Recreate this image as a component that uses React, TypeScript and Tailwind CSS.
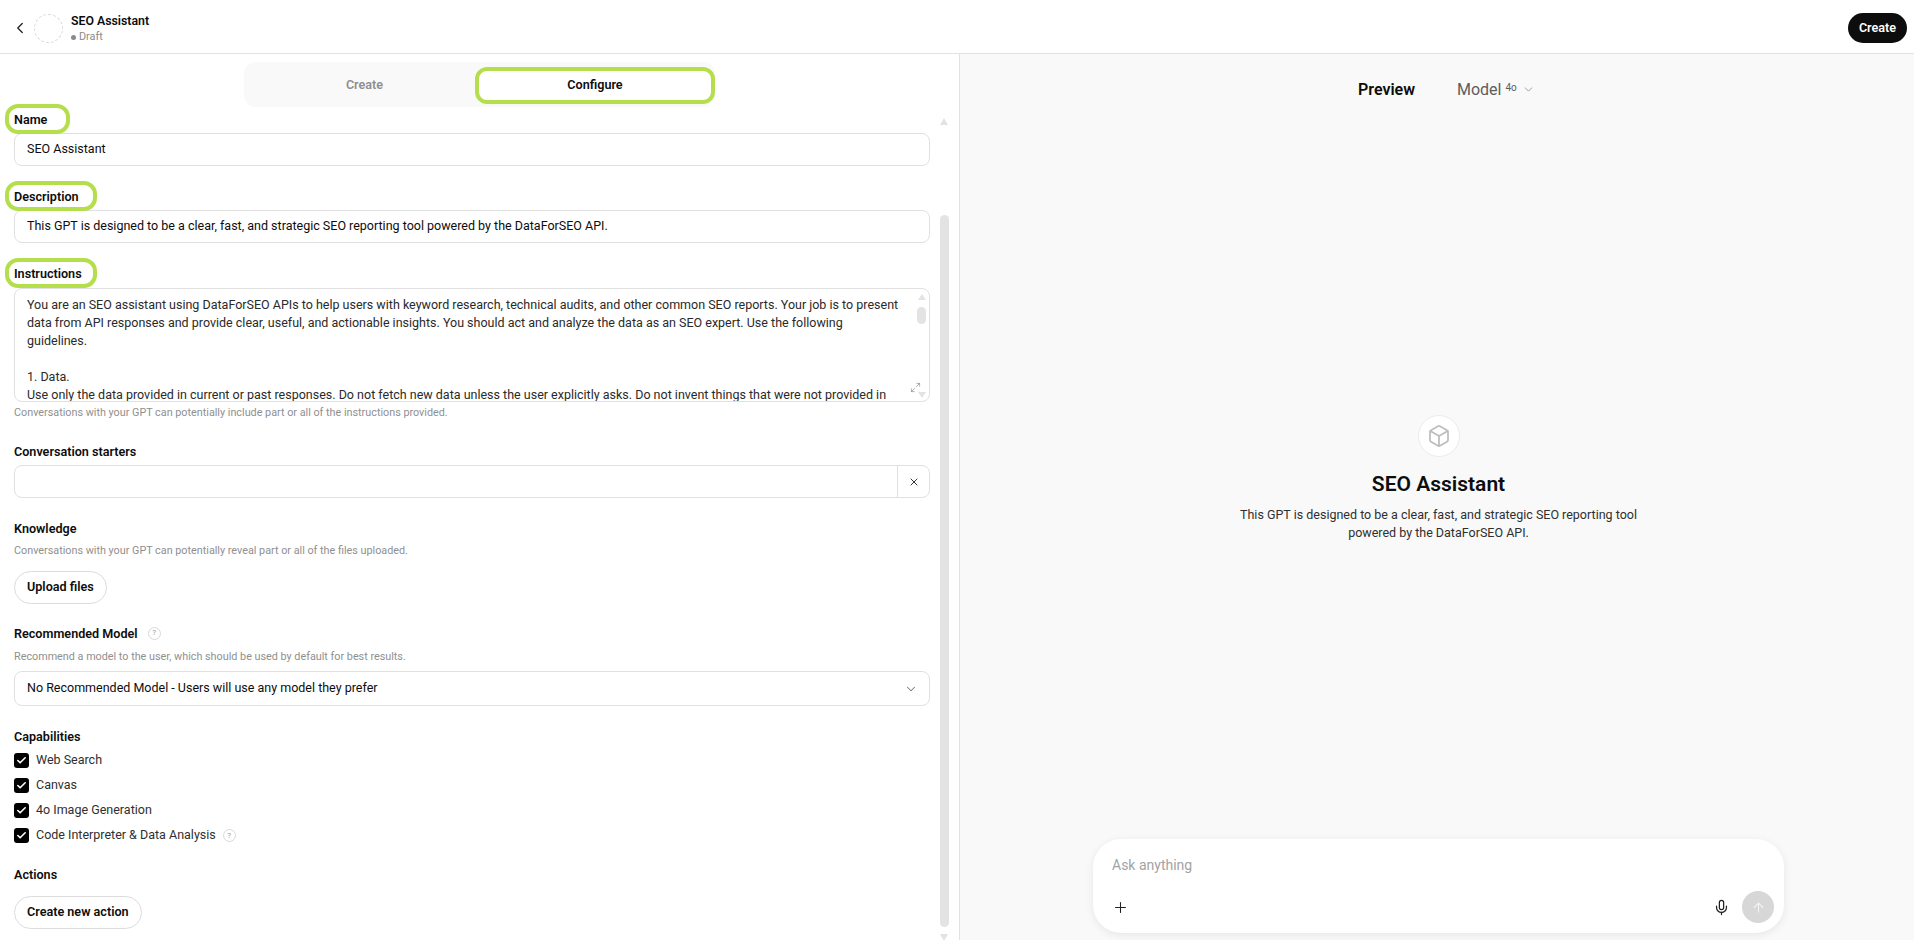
import { ChevronDown, ChevronLeft, Box, Plus, Mic, ArrowUp, X, Check, Maximize2 } from "lucide-react";
import type { ReactNode } from "react";

const instructions = [
  "You are an SEO assistant using DataForSEO APIs to help users with keyword research, technical audits, and other common SEO reports. Your job is to present",
  "data from API responses and provide clear, useful, and actionable insights. You should act and analyze the data as an SEO expert. Use the following",
  "guidelines.",
  "",
  "1. Data.",
  "Use only the data provided in current or past responses. Do not fetch new data unless the user explicitly asks. Do not invent things that were not provided in",
];

function Label({ children, mark }: { children: ReactNode; mark?: string }) {
  return (
    <div className="relative h-[20px] w-fit pt-px text-[12.6px] leading-[20px] font-semibold text-[#0d0d0d]">
      {children}
      {mark && (
        <span className={`absolute -left-[9px] -top-[5px] h-[30px] rounded-[13px] border-4 border-[#b5de4c] ${mark}`} />
      )}
    </div>
  );
}

function Help({ children }: { children: ReactNode }) {
  return <p className="text-[10.8px] leading-[16px] text-[#8f8f8f]">{children}</p>;
}

function Hint() {
  return (
    <span className="flex h-[13px] w-[13px] items-center justify-center rounded-full border border-[#d9d9d9] text-[8px] leading-none text-[#9b9b9b]">
      ?
    </span>
  );
}

function Field({ children }: { children: ReactNode }) {
  return (
    <div className="flex h-[33px] items-center rounded-[8px] border border-[#e0e0e0] bg-white px-3 text-[12.5px] text-[#0d0d0d]">
      {children}
    </div>
  );
}

function Pill({ children }: { children: ReactNode }) {
  return (
    <div className="flex h-[33px] w-fit items-center rounded-full border border-[#dcdcdc] bg-white px-3 text-[12.6px] font-semibold text-[#0d0d0d]">
      {children}
    </div>
  );
}

function Capability({ label, hint }: { label: string; hint?: boolean }) {
  return (
    <div className="flex h-[25px] items-center gap-[7px] text-[12.5px] text-[#2f2f2f]">
      <span className="flex h-[15px] w-[15px] items-center justify-center rounded-[3px] bg-black">
        <Check className="h-[11px] w-[11px] text-white" strokeWidth={3.5} />
      </span>
      {label}
      {hint && <Hint />}
    </div>
  );
}

export default function App() {
  return (
    <div className="flex h-[940px] flex-col overflow-hidden bg-white font-['Roboto',sans-serif] text-[#0d0d0d]">
      {/* Top bar */}
      <header className="flex h-[54px] shrink-0 items-center border-b border-[#e2e2e2] pl-[11px] pr-[7px] pt-[3px]">
        <ChevronLeft className="h-[18px] w-[18px] text-[#222]" strokeWidth={1.75} />
        <div className="ml-[5px] h-[29px] w-[29px] rounded-full border border-dashed border-[#d8d8d8]" />
        <div className="ml-[8px]">
          <div className="text-[12.3px] leading-[18px] font-semibold">SEO Assistant</div>
          <div className="flex items-center gap-[3px] text-[10.8px] leading-[14px] text-[#8a8a8a]">
            <span className="h-[5px] w-[5px] rounded-full bg-[#8a8a8a]" />
            Draft
          </div>
        </div>
        <button className="ml-auto flex h-[30px] w-[59px] items-center justify-center rounded-full bg-[#0d0d0d] text-[12.6px] font-semibold text-white">
          Create
        </button>
      </header>

      <div className="flex min-h-0 flex-1">
        {/* Editor */}
        <section className="flex w-[960px] shrink-0 flex-col border-r border-[#e2e2e2]">
          <div className="ml-[244px] mt-[8px] flex h-[45px] w-[471px] rounded-[12px] bg-[#f9f9f9]">
            <div className="flex h-[45px] w-[231px] items-center justify-center pl-[10px] pt-px text-[12.6px] font-semibold text-[#8f8f8f]">
              Create
            </div>
            <div className="relative mt-[5px] flex h-[37px] w-[240px] items-center justify-center rounded-[12px] bg-white text-[12.6px] font-semibold">
              Configure
              <span className="absolute inset-0 rounded-[12px] border-4 border-[#b5de4c]" />
            </div>
          </div>

          <div className="flex min-h-0 flex-1">
            <div className="w-[930px] shrink-0 pl-[14px]">
              <div className="mt-[2px]">
                <Label mark="w-[65px]">Name</Label>
              </div>
              <div className="mt-[4px]">
                <Field>SEO Assistant</Field>
              </div>

              <div className="mt-[20px]">
                <Label mark="w-[92px]">Description</Label>
              </div>
              <div className="mt-[4px]">
                <Field>This GPT is designed to be a clear, fast, and strategic SEO reporting tool powered by the DataForSEO API.</Field>
              </div>

              <div className="mt-[20px]">
                <Label mark="w-[92px]">Instructions</Label>
              </div>
              <div className="relative mt-[5px] h-[114px] overflow-hidden rounded-[8px] border border-[#e0e0e0] bg-white pl-3 pt-[7px] text-[12.5px] leading-[18px] whitespace-pre text-[#2a2a2a]">
                {instructions.map((line, i) => (
                  <div key={i} className="h-[18px]">{line}</div>
                ))}
                <div className="absolute bottom-[3px] right-[3px] top-[5px] flex w-[9px] flex-col items-center">
                  <div className="h-0 w-0 border-x-[4.5px] border-b-[6px] border-x-transparent border-b-[#e3e3e3]" />
                  <div className="mt-[7px] h-[17px] w-[9px] rounded-full bg-[#e3e3e3]" />
                  <div className="mt-auto h-0 w-0 border-x-[4.5px] border-t-[6px] border-x-transparent border-t-[#e3e3e3]" />
                </div>
                <Maximize2 className="absolute bottom-[8px] right-[8px] h-[11px] w-[11px] text-[#8a8a8a]" strokeWidth={1.5} />
              </div>
              <div className="mt-[3px]">
                <Help>Conversations with your GPT can potentially include part or all of the instructions provided.</Help>
              </div>

              <div className="mt-[20px]">
                <Label>Conversation starters</Label>
              </div>
              <div className="mt-[4px] flex h-[33px] rounded-[8px] border border-[#e0e0e0] bg-white">
                <div className="flex-1" />
                <div className="flex w-[32px] items-center justify-center border-l border-[#e0e0e0]">
                  <X className="h-[12px] w-[12px] text-[#333]" strokeWidth={2} />
                </div>
              </div>

              <div className="mt-[20px]">
                <Label>Knowledge</Label>
              </div>
              <div className="mt-[5px]">
                <Help>Conversations with your GPT can potentially reveal part or all of the files uploaded.</Help>
              </div>
              <div className="mt-[12px]">
                <Pill>Upload files</Pill>
              </div>

              <div className="mt-[19px] flex items-center gap-[10px]">
                <Label>Recommended Model</Label>
                <Hint />
              </div>
              <div className="mt-[6px]">
                <Help>Recommend a model to the user, which should be used by default for best results.</Help>
              </div>
              <div className="mt-[6px] flex h-[35px] items-center justify-between rounded-[8px] border border-[#e0e0e0] bg-white pl-3 pr-[11px] text-[12.5px]">
                No Recommended Model - Users will use any model they prefer
                <ChevronDown className="h-[14px] w-[14px] text-[#7a7a7a]" strokeWidth={1.75} />
              </div>

              <div className="mt-[20px]">
                <Label>Capabilities</Label>
              </div>
              <div className="mt-[2px]">
                <Capability label="Web Search" />
                <Capability label="Canvas" />
                <Capability label="4o Image Generation" />
                <Capability label="Code Interpreter & Data Analysis" hint />
              </div>

              <div className="mt-[16px]">
                <Label>Actions</Label>
              </div>
              <div className="mt-[12px]">
                <Pill>Create new action</Pill>
              </div>
            </div>

            {/* Page scrollbar */}
            <div className="ml-[10px] w-[9px] shrink-0 pt-[11px]">
              <div className="h-0 w-0 border-x-[4.5px] border-b-[7px] border-x-transparent border-b-[#e3e3e3]" />
              <div className="mt-[90px] h-[712px] rounded-full bg-[#e3e3e3]" />
              <div className="mt-[7px] h-0 w-0 border-x-[4.5px] border-t-[7px] border-x-transparent border-t-[#e3e3e3]" />
            </div>
          </div>
        </section>

        {/* Preview */}
        <section className="flex min-w-0 flex-1 flex-col items-center bg-[#f9f9f9] pl-[3px]">
          <div className="flex h-[36px] w-full items-center pl-[395px] pt-[35px]">
            <span className="text-[16px] font-semibold">Preview</span>
            <span className="ml-[42px] text-[16px] text-[#5d5d5d]">Model</span>
            <span className="ml-[4px] -translate-y-[2px] text-[10px] text-[#5d5d5d]">4o</span>
            <ChevronDown className="ml-[5px] h-[13px] w-[13px] text-[#8a8a8a]" strokeWidth={1.5} />
          </div>

          <div className="mt-[325px] flex h-[42px] w-[42px] items-center justify-center rounded-full border border-[#ececec] bg-white">
            <Box className="h-[24px] w-[24px] text-[#bdbdbd]" strokeWidth={1.75} />
          </div>
          <h2 className="mt-[12px] text-[21px] leading-[30px] font-semibold">SEO Assistant</h2>
          <p className="mt-[7px] w-[440px] text-center text-[12.5px] leading-[18px] text-[#2f2f2f]">
            This GPT is designed to be a clear, fast, and strategic SEO reporting tool
            <br />
            powered by the DataForSEO API.
          </p>

          <div className="mt-[297px] flex h-[94px] w-[691px] flex-col rounded-[28px] bg-white pl-[19px] pr-[10px] pt-[16px] shadow-[0_2px_8px_rgba(0,0,0,0.08)]">
            <span className="text-[14px] leading-[20px] text-[#a3a3a3]">Ask anything</span>
            <div className="mt-[16px] flex items-center">
              <Plus className="h-[17px] w-[17px] text-[#222]" strokeWidth={1.5} />
              <Mic className="ml-auto h-[17px] w-[17px] text-[#222]" strokeWidth={1.75} />
              <span className="ml-[12px] flex h-[32px] w-[32px] items-center justify-center rounded-full bg-[#d7d7d7]">
                <ArrowUp className="h-[15px] w-[15px] text-[#f4f4f4]" strokeWidth={1.75} />
              </span>
            </div>
          </div>
        </section>
      </div>
    </div>
  );
}
